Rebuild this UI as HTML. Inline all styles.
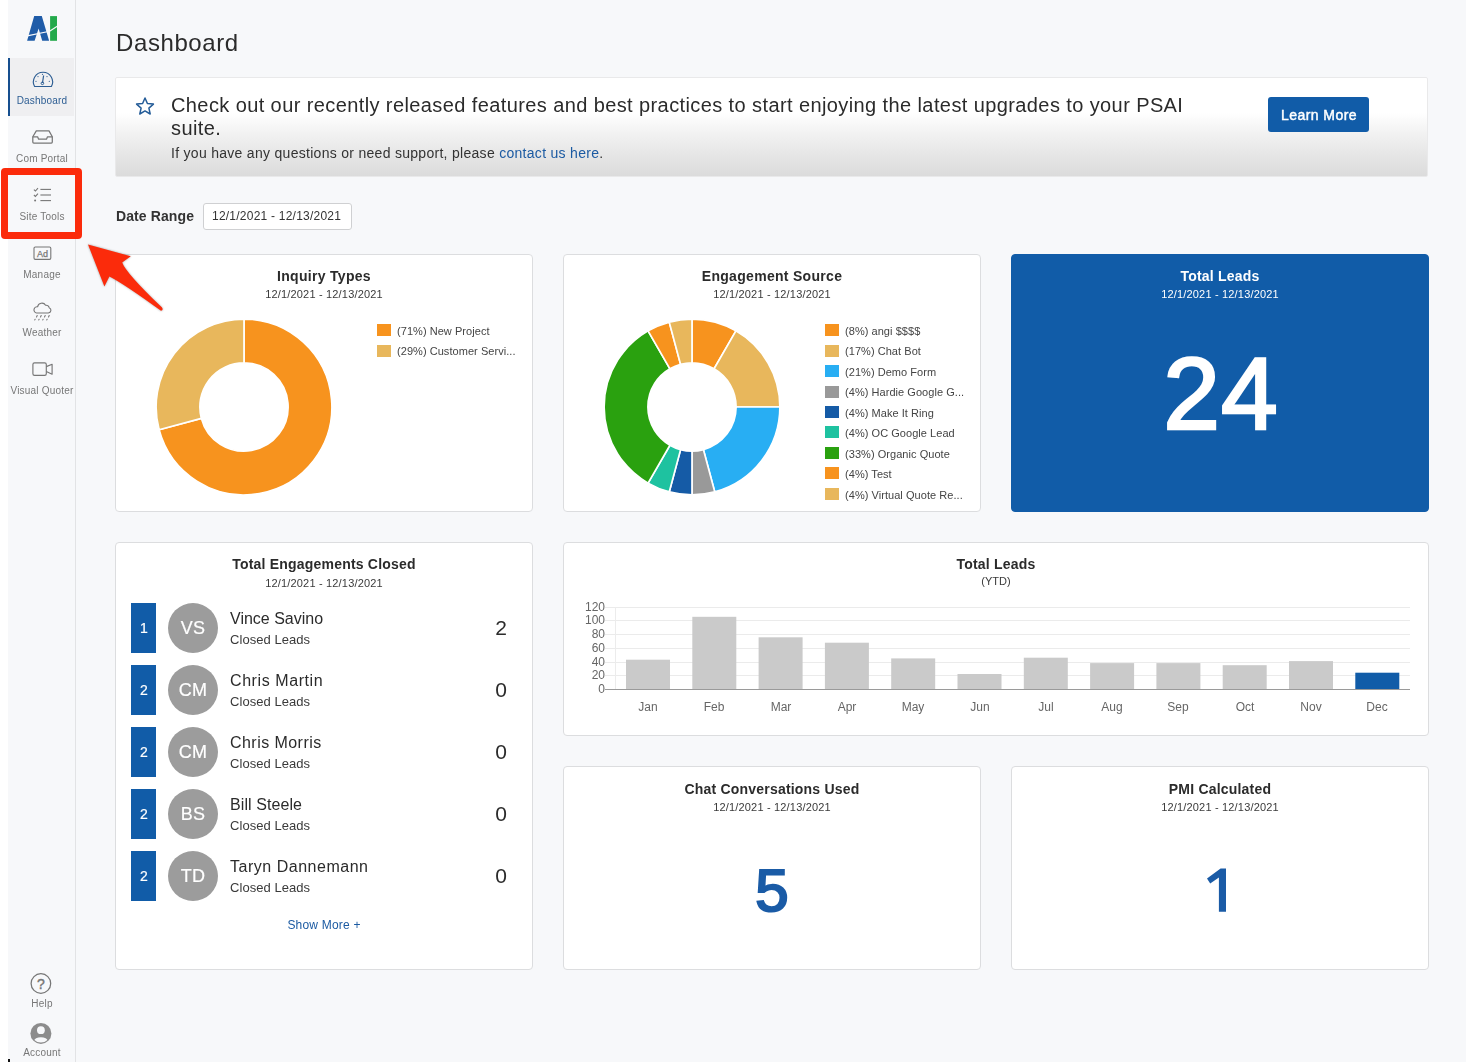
<!DOCTYPE html>
<html><head><meta charset="utf-8">
<style>
*{box-sizing:border-box;margin:0;padding:0}
html,body{width:1466px;height:1062px;overflow:hidden}
body{background:#f7f8fa;font-family:"Liberation Sans",sans-serif;color:#333;position:relative}
.a{position:absolute}
.t{position:absolute;line-height:1;white-space:nowrap;will-change:transform}
.card{position:absolute;background:#fff;border:1px solid #dcdddf;border-radius:4px}
</style></head><body>

<div class="a" style="left:0;top:0;width:8px;height:1062px;background:#fff"></div>
<div class="a" style="left:8px;top:0;width:68px;height:1062px;background:#f7f8fa;border-right:1px solid #e2e3e5"></div>
<svg class="a" style="left:0;top:0" width="80" height="50" viewBox="0 0 80 50">
<polygon points="34.2,16.1 41.8,16.1 49.1,40.8 42.2,40.8 38.6,28.6 34.6,40.8 27.1,40.8" fill="#1f5ca8"/>
<rect x="50.1" y="16.1" width="6.9" height="24.7" fill="#23a94b"/>
<line x1="26" y1="36.1" x2="49.6" y2="31.3" stroke="#f7f8fa" stroke-width="1.1"/>
<line x1="49.6" y1="31.3" x2="58" y2="25.8" stroke="#f7f8fa" stroke-width="1.1"/>
</svg>
<div class="a" style="left:8px;top:58px;width:2px;height:58px;background:#164f8f"></div>
<div class="a" style="left:10px;top:58px;width:64px;height:58px;background:#efeff1"></div>
<svg class="a" style="left:30px;top:68px" width="26" height="22" viewBox="30 68 26 22">
<path d="M34.6 86.5 A9.6 9.6 0 1 1 51.4 86.5 Z" fill="none" stroke="#2c5d93" stroke-width="1.15" stroke-linejoin="round"/>
<line x1="42.5" y1="83" x2="43.6" y2="75.5" stroke="#2c5d93" stroke-width="1.2"/>
<circle cx="42.4" cy="83.3" r="1.3" fill="none" stroke="#2c5d93" stroke-width="1"/>
<circle cx="38" cy="76.6" r="0.6" fill="#2c5d93"/><circle cx="36" cy="81.3" r="0.6" fill="#2c5d93"/>
<circle cx="42.5" cy="74.3" r="0.6" fill="#2c5d93"/><circle cx="47" cy="76.6" r="0.6" fill="#2c5d93"/><circle cx="49.3" cy="81.3" r="0.6" fill="#2c5d93"/>
</svg>
<svg class="a" style="left:28px;top:126px" width="30" height="22" viewBox="28 126 30 22">
<path d="M36.3 130.9 H49 L52.3 136.8 V142 Q52.3 143 51.3 143 H33.8 Q32.8 143 32.8 142 V136.8 Z" fill="none" stroke="#777" stroke-width="1.25" stroke-linejoin="round"/>
<path d="M32.8 136.8 H37.6 L38.6 139.2 H46.5 L47.5 136.8 H52.3" fill="none" stroke="#777" stroke-width="1.25" stroke-linejoin="round"/>
</svg>
<svg class="a" style="left:28px;top:184px" width="30" height="22" viewBox="28 184 30 22">
<path d="M33.9 189.6 L35.4 191 L38 188.2" fill="none" stroke="#777" stroke-width="1.1"/>
<path d="M33.9 195 L35.4 196.4 L38 193.6" fill="none" stroke="#777" stroke-width="1.1"/>
<circle cx="35.1" cy="200.6" r="1" fill="#777"/>
<line x1="40.4" y1="189.4" x2="51" y2="189.4" stroke="#777" stroke-width="1.1"/>
<line x1="40.4" y1="195" x2="51" y2="195" stroke="#777" stroke-width="1.1"/>
<line x1="40.4" y1="200.6" x2="51" y2="200.6" stroke="#777" stroke-width="1.1"/>
</svg>
<svg class="a" style="left:28px;top:242px" width="30" height="22" viewBox="28 242 30 22">
<rect x="34" y="247" width="16.8" height="12.4" rx="1.3" fill="none" stroke="#777" stroke-width="1.1"/>
<text x="42.4" y="256.6" text-anchor="middle" font-family="Liberation Sans" font-size="9" font-weight="400" fill="#777" stroke="#777" stroke-width="0.25">Ad</text>
</svg>
<svg class="a" style="left:28px;top:298px" width="30" height="26" viewBox="28 298 30 26">
<path d="M36.6 313 H48.3 A2.75 2.75 0 0 0 49.2 307.7 A3.3 3.3 0 0 0 45.6 305.3 A4.3 4.3 0 0 0 37.6 306.8 A3.1 3.1 0 0 0 36.6 313 Z" fill="none" stroke="#777" stroke-width="1.1" stroke-linejoin="round"/>
<path d="M34.8 319.9 L35.1 319.2 M36.5 316.9 L37.2 315.5 M38.8 319.9 L39.1 319.2 M40.5 316.9 L41.2 315.5 M42.8 319.9 L43.1 319.2 M44.5 316.9 L45.2 315.5 M46.8 319.9 L47.1 319.2 M48.5 316.9 L49.2 315.5" stroke="#777" stroke-width="1.1" stroke-linecap="round"/>
</svg>
<svg class="a" style="left:28px;top:358px" width="30" height="22" viewBox="28 358 30 22">
<rect x="32.9" y="362.9" width="13.4" height="12.5" rx="1.6" fill="none" stroke="#777" stroke-width="1.15"/>
<path d="M46.3 366.6 L52.1 364.3 V374.2 L46.3 371.6" fill="none" stroke="#777" stroke-width="1.15" stroke-linejoin="round"/>
</svg>
<svg class="a" style="left:26px;top:970px" width="30" height="28" viewBox="26 970 30 28">
<circle cx="40.9" cy="983.5" r="9.8" fill="none" stroke="#777" stroke-width="1.25"/>
<text x="40.9" y="988.6" text-anchor="middle" font-family="Liberation Sans" font-size="14" fill="#777" stroke="#777" stroke-width="0.4">?</text>
</svg>
<svg class="a" style="left:26px;top:1018px" width="30" height="30" viewBox="26 1018 30 30">
<defs><clipPath id="acc"><circle cx="40.9" cy="1033.4" r="9.2"/></clipPath></defs>
<circle cx="40.9" cy="1033.4" r="10.5" fill="#8c8c8c"/>
<circle cx="40.9" cy="1030.2" r="3.9" fill="#f7f8fa"/>
<g clip-path="url(#acc)"><ellipse cx="40.9" cy="1041.2" rx="6.8" ry="4" fill="#f7f8fa"/></g>
</svg>
<div class="a" style="left:8px;top:1059px;width:1.5px;height:3px;background:#111"></div>
<div class="t" style="left:-358.0px;width:800px;text-align:center;top:96.2px;font-size:10px;color:#2c5d93;font-weight:400;letter-spacing:0.2px;">Dashboard</div>
<div class="t" style="left:-358.0px;width:800px;text-align:center;top:153.8px;font-size:10px;color:#777;font-weight:400;letter-spacing:0.2px;">Com Portal</div>
<div class="t" style="left:-358.0px;width:800px;text-align:center;top:212.0px;font-size:10px;color:#777;font-weight:400;letter-spacing:0.2px;">Site Tools</div>
<div class="t" style="left:-358.0px;width:800px;text-align:center;top:269.8px;font-size:10px;color:#777;font-weight:400;letter-spacing:0.2px;">Manage</div>
<div class="t" style="left:-358.0px;width:800px;text-align:center;top:328.0px;font-size:10px;color:#777;font-weight:400;letter-spacing:0.2px;">Weather</div>
<div class="t" style="left:-358.0px;width:800px;text-align:center;top:386.1px;font-size:10px;color:#777;font-weight:400;letter-spacing:0.2px;">Visual Quoter</div>
<div class="t" style="left:-358.0px;width:800px;text-align:center;top:998.5px;font-size:10px;color:#777;font-weight:400;letter-spacing:0.2px;">Help</div>
<div class="t" style="left:-358.0px;width:800px;text-align:center;top:1048.3px;font-size:10px;color:#777;font-weight:400;letter-spacing:0.2px;">Account</div>
<div class="t" style="left:116.0px;top:30.9px;font-size:24px;color:#2b2b2b;font-weight:400;letter-spacing:0.6px;">Dashboard</div>
<div class="a" style="left:115px;top:77px;width:1313px;height:100px;border:1px solid #e9e9ea;border-radius:2px;background:linear-gradient(#fff 0,#fff 35px,#f0f0f0 58px,#dbdbdb 100%)"></div>
<svg class="a" style="left:0;top:0" width="200" height="130" viewBox="0 0 200 130">
<path d="M145.00 98.00 L147.41 103.53 L153.42 104.12 L148.90 108.12 L150.20 114.01 L145.00 110.95 L139.80 114.01 L141.10 108.12 L136.58 104.12 L142.59 103.53 Z" fill="none" stroke="#245c98" stroke-width="1.5" stroke-linejoin="round"/>
</svg>
<div class="t" style="left:171.0px;top:95.1px;font-size:20px;color:#2b2b2b;font-weight:400;letter-spacing:0.4px;">Check out our recently released features and best practices to start enjoying the latest upgrades to your PSAI</div>
<div class="t" style="left:171.0px;top:118.2px;font-size:20px;color:#2b2b2b;font-weight:400;letter-spacing:0.4px;">suite.</div>
<div class="t" style="left:171.0px;top:145.9px;font-size:14px;color:#333;font-weight:400;letter-spacing:0.29px;">If you have any questions or need support, please <span style="color:#1b5aa2">contact us here</span>.</div>
<div class="a" style="left:1268px;top:97px;width:101px;height:35px;background:#115ca8;border-radius:3px"></div>
<div class="t" style="left:918.5px;width:800px;text-align:center;top:107.6px;font-size:14px;color:#fff;font-weight:400;letter-spacing:0.45px;-webkit-text-stroke:0.45px #fff;">Learn More</div>
<div class="t" style="left:116.0px;top:208.9px;font-size:14px;color:#333;font-weight:700;letter-spacing:0.1px;">Date Range</div>
<div class="a" style="left:203px;top:203px;width:149px;height:27px;background:#fff;border:1px solid #cfd0d2;border-radius:3px"></div>
<div class="t" style="left:212.0px;top:209.5px;font-size:12px;color:#333;font-weight:400;letter-spacing:0.23px;">12/1/2021 - 12/13/2021</div>
<div class="card" style="left:115px;top:254px;width:418px;height:258px;"></div>
<div class="card" style="left:563px;top:254px;width:418px;height:258px;"></div>
<div class="card" style="left:1011px;top:254px;width:418px;height:258px;background:#115ca8;border-color:#115ca8"></div>
<div class="t" style="left:-76.0px;width:800px;text-align:center;top:269.4px;font-size:14px;color:#2b2b2b;font-weight:700;letter-spacing:0.3px;">Inquiry Types</div>
<div class="t" style="left:-76.0px;width:800px;text-align:center;top:289.2px;font-size:11px;color:#3a3a3a;font-weight:400;letter-spacing:0.18px;">12/1/2021 - 12/13/2021</div>
<div class="t" style="left:372.0px;width:800px;text-align:center;top:269.4px;font-size:14px;color:#2b2b2b;font-weight:700;letter-spacing:0.3px;">Engagement Source</div>
<div class="t" style="left:372.0px;width:800px;text-align:center;top:289.2px;font-size:11px;color:#3a3a3a;font-weight:400;letter-spacing:0.18px;">12/1/2021 - 12/13/2021</div>
<div class="t" style="left:820.0px;width:800px;text-align:center;top:268.8px;font-size:14px;color:#fff;font-weight:700;letter-spacing:0.2px;">Total Leads</div>
<div class="t" style="left:820.0px;width:800px;text-align:center;top:289.2px;font-size:11px;color:#fff;font-weight:400;letter-spacing:0.18px;">12/1/2021 - 12/13/2021</div>
<div class="t" style="left:821.0px;width:800px;text-align:center;top:343.3px;font-size:102px;color:#fff;font-weight:400;letter-spacing:1px;-webkit-text-stroke:2.6px #fff;">24</div>
<svg class="a" style="left:156.3px;top:319px" width="176" height="176" viewBox="0 0 176 176"><path d="M88.00 0.10A87.9 87.9 0 1 1 3.10 110.75L45.40 99.41A44.1 44.1 0 1 0 88.00 43.90Z" fill="#f7931e" stroke="#fff" stroke-width="1.7" stroke-linejoin="miter"/><path d="M3.10 110.75A87.9 87.9 0 0 1 88.00 0.10L88.00 43.90A44.1 44.1 0 0 0 45.40 99.41Z" fill="#e8b75c" stroke="#fff" stroke-width="1.7" stroke-linejoin="miter"/></svg>
<svg class="a" style="left:604.1px;top:319px" width="176" height="176" viewBox="0 0 176 176"><path d="M88.00 0.10A87.9 87.9 0 0 1 131.95 11.88L110.05 49.81A44.1 44.1 0 0 0 88.00 43.90Z" fill="#f7931e" stroke="#fff" stroke-width="1.7" stroke-linejoin="miter"/><path d="M131.95 11.88A87.9 87.9 0 0 1 175.90 88.00L132.10 88.00A44.1 44.1 0 0 0 110.05 49.81Z" fill="#e8b75c" stroke="#fff" stroke-width="1.7" stroke-linejoin="miter"/><path d="M175.90 88.00A87.9 87.9 0 0 1 110.75 172.90L99.41 130.60A44.1 44.1 0 0 0 132.10 88.00Z" fill="#28aef3" stroke="#fff" stroke-width="1.7" stroke-linejoin="miter"/><path d="M110.75 172.90A87.9 87.9 0 0 1 88.00 175.90L88.00 132.10A44.1 44.1 0 0 0 99.41 130.60Z" fill="#999999" stroke="#fff" stroke-width="1.7" stroke-linejoin="miter"/><path d="M88.00 175.90A87.9 87.9 0 0 1 65.25 172.90L76.59 130.60A44.1 44.1 0 0 0 88.00 132.10Z" fill="#155ba6" stroke="#fff" stroke-width="1.7" stroke-linejoin="miter"/><path d="M65.25 172.90A87.9 87.9 0 0 1 44.05 164.12L65.95 126.19A44.1 44.1 0 0 0 76.59 130.60Z" fill="#1ec2a0" stroke="#fff" stroke-width="1.7" stroke-linejoin="miter"/><path d="M44.05 164.12A87.9 87.9 0 0 1 44.05 11.88L65.95 49.81A44.1 44.1 0 0 0 65.95 126.19Z" fill="#2aa10f" stroke="#fff" stroke-width="1.7" stroke-linejoin="miter"/><path d="M44.05 11.88A87.9 87.9 0 0 1 65.25 3.10L76.59 45.40A44.1 44.1 0 0 0 65.95 49.81Z" fill="#f7931e" stroke="#fff" stroke-width="1.7" stroke-linejoin="miter"/><path d="M65.25 3.10A87.9 87.9 0 0 1 88.00 0.10L88.00 43.90A44.1 44.1 0 0 0 76.59 45.40Z" fill="#e8b75c" stroke="#fff" stroke-width="1.7" stroke-linejoin="miter"/></svg>
<div class="a" style="left:377px;top:324.3px;width:14px;height:12px;background:#f7931e"></div><div class="t" style="left:397.0px;top:326.0px;font-size:11px;color:#444;font-weight:400;letter-spacing:0.05px;">(71%) New Project</div><div class="a" style="left:377px;top:344.8px;width:14px;height:12px;background:#e8b75c"></div><div class="t" style="left:397.0px;top:346.4px;font-size:11px;color:#444;font-weight:400;letter-spacing:0.05px;">(29%) Customer Servi...</div>
<div class="a" style="left:825px;top:324.2px;width:14px;height:12px;background:#f7931e"></div><div class="t" style="left:845.0px;top:325.9px;font-size:11px;color:#444;font-weight:400;letter-spacing:0.05px;">(8%) angi $$$$</div><div class="a" style="left:825px;top:344.6px;width:14px;height:12px;background:#e8b75c"></div><div class="t" style="left:845.0px;top:346.3px;font-size:11px;color:#444;font-weight:400;letter-spacing:0.05px;">(17%) Chat Bot</div><div class="a" style="left:825px;top:365.1px;width:14px;height:12px;background:#28aef3"></div><div class="t" style="left:845.0px;top:366.8px;font-size:11px;color:#444;font-weight:400;letter-spacing:0.05px;">(21%) Demo Form</div><div class="a" style="left:825px;top:385.5px;width:14px;height:12px;background:#999999"></div><div class="t" style="left:845.0px;top:387.2px;font-size:11px;color:#444;font-weight:400;letter-spacing:0.05px;">(4%) Hardie Google G...</div><div class="a" style="left:825px;top:406.0px;width:14px;height:12px;background:#155ba6"></div><div class="t" style="left:845.0px;top:407.7px;font-size:11px;color:#444;font-weight:400;letter-spacing:0.05px;">(4%) Make It Ring</div><div class="a" style="left:825px;top:426.4px;width:14px;height:12px;background:#1ec2a0"></div><div class="t" style="left:845.0px;top:428.1px;font-size:11px;color:#444;font-weight:400;letter-spacing:0.05px;">(4%) OC Google Lead</div><div class="a" style="left:825px;top:446.9px;width:14px;height:12px;background:#2aa10f"></div><div class="t" style="left:845.0px;top:448.6px;font-size:11px;color:#444;font-weight:400;letter-spacing:0.05px;">(33%) Organic Quote</div><div class="a" style="left:825px;top:467.4px;width:14px;height:12px;background:#f7931e"></div><div class="t" style="left:845.0px;top:469.0px;font-size:11px;color:#444;font-weight:400;letter-spacing:0.05px;">(4%) Test</div><div class="a" style="left:825px;top:487.8px;width:14px;height:12px;background:#e8b75c"></div><div class="t" style="left:845.0px;top:489.5px;font-size:11px;color:#444;font-weight:400;letter-spacing:0.05px;">(4%) Virtual Quote Re...</div>
<div class="card" style="left:115px;top:542px;width:418px;height:428px;"></div>
<div class="card" style="left:563px;top:542px;width:866px;height:194px;"></div>
<div class="card" style="left:563px;top:766px;width:418px;height:204px;"></div>
<div class="card" style="left:1011px;top:766px;width:418px;height:204px;"></div>
<div class="t" style="left:-76.0px;width:800px;text-align:center;top:556.8px;font-size:14px;color:#2b2b2b;font-weight:700;letter-spacing:0.2px;">Total Engagements Closed</div>
<div class="t" style="left:-76.0px;width:800px;text-align:center;top:577.8px;font-size:11px;color:#3a3a3a;font-weight:400;letter-spacing:0.18px;">12/1/2021 - 12/13/2021</div>
<div class="a" style="left:131px;top:603px;width:25px;height:50px;background:#115ca8"></div>
<div class="t" style="left:-256.5px;width:800px;text-align:center;top:621.3px;font-size:14px;color:#fff;font-weight:400;letter-spacing:0px;-webkit-text-stroke:0.2px #fff;">1</div>
<div class="a" style="left:168px;top:603px;width:50px;height:50px;border-radius:50%;background:#9c9c9c"></div>
<div class="t" style="left:-207.0px;width:800px;text-align:center;top:619.0px;font-size:18px;color:#fff;font-weight:400;letter-spacing:0.2px;-webkit-text-stroke:0.2px #fff;">VS</div>
<div class="t" style="left:230.3px;top:611.0px;font-size:16px;color:#2b2b2b;font-weight:400;letter-spacing:0px;">Vince Savino</div>
<div class="t" style="left:230.3px;top:633.1px;font-size:13px;color:#3a3a3a;font-weight:400;letter-spacing:0.05px;">Closed Leads</div>
<div class="t" style="left:-293.0px;width:800px;text-align:right;top:616.9px;font-size:21px;color:#2b2b2b;font-weight:400;letter-spacing:0px;">2</div>
<div class="a" style="left:131px;top:665px;width:25px;height:50px;background:#115ca8"></div>
<div class="t" style="left:-256.5px;width:800px;text-align:center;top:683.3px;font-size:14px;color:#fff;font-weight:400;letter-spacing:0px;-webkit-text-stroke:0.2px #fff;">2</div>
<div class="a" style="left:168px;top:665px;width:50px;height:50px;border-radius:50%;background:#9c9c9c"></div>
<div class="t" style="left:-207.0px;width:800px;text-align:center;top:681.0px;font-size:18px;color:#fff;font-weight:400;letter-spacing:0.2px;-webkit-text-stroke:0.2px #fff;">CM</div>
<div class="t" style="left:230.3px;top:673.0px;font-size:16px;color:#2b2b2b;font-weight:400;letter-spacing:0.58px;">Chris Martin</div>
<div class="t" style="left:230.3px;top:695.1px;font-size:13px;color:#3a3a3a;font-weight:400;letter-spacing:0.05px;">Closed Leads</div>
<div class="t" style="left:-293.0px;width:800px;text-align:right;top:678.9px;font-size:21px;color:#2b2b2b;font-weight:400;letter-spacing:0px;">0</div>
<div class="a" style="left:131px;top:727px;width:25px;height:50px;background:#115ca8"></div>
<div class="t" style="left:-256.5px;width:800px;text-align:center;top:745.3px;font-size:14px;color:#fff;font-weight:400;letter-spacing:0px;-webkit-text-stroke:0.2px #fff;">2</div>
<div class="a" style="left:168px;top:727px;width:50px;height:50px;border-radius:50%;background:#9c9c9c"></div>
<div class="t" style="left:-207.0px;width:800px;text-align:center;top:743.0px;font-size:18px;color:#fff;font-weight:400;letter-spacing:0.2px;-webkit-text-stroke:0.2px #fff;">CM</div>
<div class="t" style="left:230.3px;top:735.0px;font-size:16px;color:#2b2b2b;font-weight:400;letter-spacing:0.45px;">Chris Morris</div>
<div class="t" style="left:230.3px;top:757.1px;font-size:13px;color:#3a3a3a;font-weight:400;letter-spacing:0.05px;">Closed Leads</div>
<div class="t" style="left:-293.0px;width:800px;text-align:right;top:740.9px;font-size:21px;color:#2b2b2b;font-weight:400;letter-spacing:0px;">0</div>
<div class="a" style="left:131px;top:789px;width:25px;height:50px;background:#115ca8"></div>
<div class="t" style="left:-256.5px;width:800px;text-align:center;top:807.3px;font-size:14px;color:#fff;font-weight:400;letter-spacing:0px;-webkit-text-stroke:0.2px #fff;">2</div>
<div class="a" style="left:168px;top:789px;width:50px;height:50px;border-radius:50%;background:#9c9c9c"></div>
<div class="t" style="left:-207.0px;width:800px;text-align:center;top:805.0px;font-size:18px;color:#fff;font-weight:400;letter-spacing:0.2px;-webkit-text-stroke:0.2px #fff;">BS</div>
<div class="t" style="left:230.3px;top:797.0px;font-size:16px;color:#2b2b2b;font-weight:400;letter-spacing:0.08px;">Bill Steele</div>
<div class="t" style="left:230.3px;top:819.1px;font-size:13px;color:#3a3a3a;font-weight:400;letter-spacing:0.05px;">Closed Leads</div>
<div class="t" style="left:-293.0px;width:800px;text-align:right;top:802.9px;font-size:21px;color:#2b2b2b;font-weight:400;letter-spacing:0px;">0</div>
<div class="a" style="left:131px;top:851px;width:25px;height:50px;background:#115ca8"></div>
<div class="t" style="left:-256.5px;width:800px;text-align:center;top:869.3px;font-size:14px;color:#fff;font-weight:400;letter-spacing:0px;-webkit-text-stroke:0.2px #fff;">2</div>
<div class="a" style="left:168px;top:851px;width:50px;height:50px;border-radius:50%;background:#9c9c9c"></div>
<div class="t" style="left:-207.0px;width:800px;text-align:center;top:867.0px;font-size:18px;color:#fff;font-weight:400;letter-spacing:0.2px;-webkit-text-stroke:0.2px #fff;">TD</div>
<div class="t" style="left:230.3px;top:859.0px;font-size:16px;color:#2b2b2b;font-weight:400;letter-spacing:0.52px;">Taryn Dannemann</div>
<div class="t" style="left:230.3px;top:881.1px;font-size:13px;color:#3a3a3a;font-weight:400;letter-spacing:0.05px;">Closed Leads</div>
<div class="t" style="left:-293.0px;width:800px;text-align:right;top:864.9px;font-size:21px;color:#2b2b2b;font-weight:400;letter-spacing:0px;">0</div>
<div class="t" style="left:-76.0px;width:800px;text-align:center;top:919.1px;font-size:12px;color:#1b5aa2;font-weight:400;letter-spacing:0.2px;">Show More +</div>
<div class="t" style="left:596.0px;width:800px;text-align:center;top:557.2px;font-size:14px;color:#2b2b2b;font-weight:700;letter-spacing:0.2px;">Total Leads</div>
<div class="t" style="left:596.0px;width:800px;text-align:center;top:576.3px;font-size:11px;color:#3a3a3a;font-weight:400;letter-spacing:0px;">(YTD)</div>
<svg class="a" style="left:0;top:0" width="1466" height="1062" viewBox="0 0 1466 1062"><line x1="605" y1="675.5" x2="1410" y2="675.5" stroke="#ebebeb" stroke-width="1"/><line x1="605" y1="662.5" x2="1410" y2="662.5" stroke="#ebebeb" stroke-width="1"/><line x1="605" y1="648.5" x2="1410" y2="648.5" stroke="#ebebeb" stroke-width="1"/><line x1="605" y1="634.5" x2="1410" y2="634.5" stroke="#ebebeb" stroke-width="1"/><line x1="605" y1="620.5" x2="1410" y2="620.5" stroke="#ebebeb" stroke-width="1"/><line x1="605" y1="607.5" x2="1410" y2="607.5" stroke="#ebebeb" stroke-width="1"/><line x1="615.5" y1="607.5" x2="615.5" y2="689.0" stroke="#ececec" stroke-width="1"/><rect x="626.0" y="659.7" width="44" height="29.3" fill="#cacaca"/><rect x="692.3" y="616.8" width="44" height="72.2" fill="#cacaca"/><rect x="758.6" y="637.3" width="44" height="51.7" fill="#cacaca"/><rect x="824.9" y="642.7" width="44" height="46.3" fill="#cacaca"/><rect x="891.2" y="658.4" width="44" height="30.6" fill="#cacaca"/><rect x="957.5" y="674.0" width="44" height="15.0" fill="#cacaca"/><rect x="1023.8" y="657.7" width="44" height="31.3" fill="#cacaca"/><rect x="1090.1" y="663.1" width="44" height="25.9" fill="#cacaca"/><rect x="1156.4" y="663.1" width="44" height="25.9" fill="#cacaca"/><rect x="1222.7" y="665.2" width="44" height="23.8" fill="#cacaca"/><rect x="1289.0" y="661.1" width="44" height="27.9" fill="#cacaca"/><rect x="1355.3" y="672.7" width="44" height="16.3" fill="#115ca8"/><line x1="605" y1="689.5" x2="1410" y2="689.5" stroke="#9a9a9a" stroke-width="1"/></svg>
<div class="t" style="left:-195.5px;width:800px;text-align:right;top:683.1px;font-size:12px;color:#666;font-weight:400;letter-spacing:0px;">0</div>
<div class="t" style="left:-195.5px;width:800px;text-align:right;top:669.1px;font-size:12px;color:#666;font-weight:400;letter-spacing:0px;">20</div>
<div class="t" style="left:-195.5px;width:800px;text-align:right;top:656.1px;font-size:12px;color:#666;font-weight:400;letter-spacing:0px;">40</div>
<div class="t" style="left:-195.5px;width:800px;text-align:right;top:642.1px;font-size:12px;color:#666;font-weight:400;letter-spacing:0px;">60</div>
<div class="t" style="left:-195.5px;width:800px;text-align:right;top:628.1px;font-size:12px;color:#666;font-weight:400;letter-spacing:0px;">80</div>
<div class="t" style="left:-195.5px;width:800px;text-align:right;top:614.1px;font-size:12px;color:#666;font-weight:400;letter-spacing:0px;">100</div>
<div class="t" style="left:-195.5px;width:800px;text-align:right;top:601.1px;font-size:12px;color:#666;font-weight:400;letter-spacing:0px;">120</div>
<div class="t" style="left:248.0px;width:800px;text-align:center;top:700.8px;font-size:12px;color:#666;font-weight:400;letter-spacing:0px;">Jan</div>
<div class="t" style="left:314.3px;width:800px;text-align:center;top:700.8px;font-size:12px;color:#666;font-weight:400;letter-spacing:0px;">Feb</div>
<div class="t" style="left:380.6px;width:800px;text-align:center;top:700.8px;font-size:12px;color:#666;font-weight:400;letter-spacing:0px;">Mar</div>
<div class="t" style="left:446.9px;width:800px;text-align:center;top:700.8px;font-size:12px;color:#666;font-weight:400;letter-spacing:0px;">Apr</div>
<div class="t" style="left:513.2px;width:800px;text-align:center;top:700.8px;font-size:12px;color:#666;font-weight:400;letter-spacing:0px;">May</div>
<div class="t" style="left:579.5px;width:800px;text-align:center;top:700.8px;font-size:12px;color:#666;font-weight:400;letter-spacing:0px;">Jun</div>
<div class="t" style="left:645.8px;width:800px;text-align:center;top:700.8px;font-size:12px;color:#666;font-weight:400;letter-spacing:0px;">Jul</div>
<div class="t" style="left:712.1px;width:800px;text-align:center;top:700.8px;font-size:12px;color:#666;font-weight:400;letter-spacing:0px;">Aug</div>
<div class="t" style="left:778.4px;width:800px;text-align:center;top:700.8px;font-size:12px;color:#666;font-weight:400;letter-spacing:0px;">Sep</div>
<div class="t" style="left:844.7px;width:800px;text-align:center;top:700.8px;font-size:12px;color:#666;font-weight:400;letter-spacing:0px;">Oct</div>
<div class="t" style="left:911.0px;width:800px;text-align:center;top:700.8px;font-size:12px;color:#666;font-weight:400;letter-spacing:0px;">Nov</div>
<div class="t" style="left:977.3px;width:800px;text-align:center;top:700.8px;font-size:12px;color:#666;font-weight:400;letter-spacing:0px;">Dec</div>
<div class="t" style="left:372.0px;width:800px;text-align:center;top:781.8px;font-size:14px;color:#2b2b2b;font-weight:700;letter-spacing:0.2px;">Chat Conversations Used</div>
<div class="t" style="left:372.0px;width:800px;text-align:center;top:801.5px;font-size:11px;color:#3a3a3a;font-weight:400;letter-spacing:0.18px;">12/1/2021 - 12/13/2021</div>
<div class="t" style="left:372.0px;width:800px;text-align:center;top:861.0px;font-size:60px;color:#1a5ba6;font-weight:400;letter-spacing:0px;-webkit-text-stroke:2.2px #1a5ba6;">5</div>
<div class="t" style="left:820.0px;width:800px;text-align:center;top:781.8px;font-size:14px;color:#2b2b2b;font-weight:700;letter-spacing:0.2px;">PMI Calculated</div>
<div class="t" style="left:820.0px;width:800px;text-align:center;top:801.5px;font-size:11px;color:#3a3a3a;font-weight:400;letter-spacing:0.18px;">12/1/2021 - 12/13/2021</div>
<svg class="a" style="left:1190px;top:860px" width="50" height="60" viewBox="1190 860 50 60"><path d="M1220.6 868.5 L1226 868.5 L1226 911.8 L1218.9 911.8 L1218.9 877.6 L1210.2 883.4 L1207 878.6 Z" fill="#1a5ba6"/></svg>
<div class="a" style="left:1px;top:168px;width:81px;height:71px;border:7px solid #fb2b0b;border-radius:4px"></div>
<svg class="a" style="left:0;top:0" width="200" height="330" viewBox="0 0 200 330">
<path d="M88 244.6 L130.8 256.2 L122.2 262.4 Q126 273 161.8 307.3 Q163.8 310 161 310.8 Q125 284.5 109.4 276.4 L104.4 286.4 Z" fill="#fb2b0b" style="filter:drop-shadow(0 0.6px 0.8px rgba(0,0,0,.35))"/>
</svg>
</body></html>
